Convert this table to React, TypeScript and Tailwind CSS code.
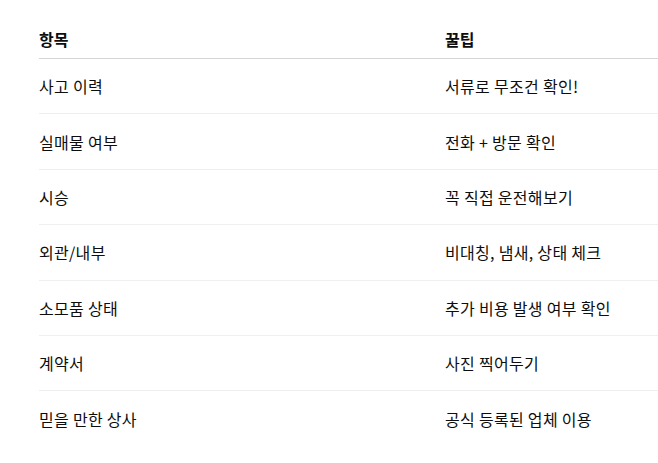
const rows: [string, string][] = [
  ["사고 이력", "서류로 무조건 확인!"],
  ["실매물 여부", "전화 + 방문 확인"],
  ["시승", "꼭 직접 운전해보기"],
  ["외관/내부", "비대칭, 냄새, 상태 체크"],
  ["소모품 상태", "추가 비용 발생 여부 확인"],
  ["계약서", "사진 찍어두기"],
  ["믿을 만한 상사", "공식 등록된 업체 이용"],
];

export default function App() {
  return (
    <div
      className="min-h-screen bg-white pl-[39px] pt-[19px] text-[#0d0d0d]"
      style={{ fontFamily: '"Noto Sans CJK KR", "Noto Sans", sans-serif' }}
    >
      <div className="grid h-[40px] grid-cols-[406px_1fr] items-center border-b border-[#d5d5d5] text-[16px] font-semibold">
        <div>항목</div>
        <div>꿀팁</div>
      </div>
      {rows.map(([item, tip], i) => (
        <div
          key={item}
          className={
            "grid h-[55.4px] grid-cols-[406px_1fr] items-center text-[16px] tracking-[0.3px] " +
            (i < rows.length - 1 ? "border-b border-[#efefef]" : "")
          }
        >
          <div>{item}</div>
          <div>{tip}</div>
        </div>
      ))}
    </div>
  );
}
